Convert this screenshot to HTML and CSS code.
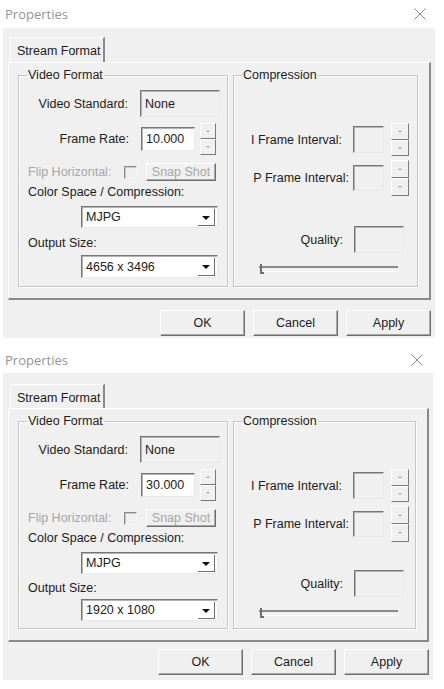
FILE: index.html
```html
<!DOCTYPE html>
<html>
<head>
<meta charset="utf-8">
<link rel="stylesheet" href="styles.css">
</head>
<body>
<div class="dialog d1">
  <div class="titlebar">
    <span class="title">Properties</span>
    <svg class="close" width="12" height="12" viewBox="0 0 12 12"><path d="M0.5 0.5 L11.5 11.5 M11.5 0.5 L0.5 11.5" stroke="#8a8a8a" stroke-width="1" fill="none"/></svg>
  </div>
  <div class="body">
    <div class="tab">Stream Format</div>
    <div class="panel">
      <fieldset class="group video">
        <legend>Video Format</legend>
        <div class="row std"><span class="lab-r">Video Standard:</span><span class="field ro">None</span></div>
        <div class="row rate"><span class="lab-r">Frame Rate:</span><span class="field edit">10.000</span><span class="spin"><span class="sb up"></span><span class="sb down"></span></span></div>
        <div class="row flip"><span class="lab-l dis">Flip Horizontal:</span><span class="check"></span><span class="btn snap">Snap Shot</span></div>
        <div class="lab cs">Color Space / Compression:</div>
        <div class="select s1"><span class="val">MJPG</span><span class="arrow"></span></div>
        <div class="lab os">Output Size:</div>
        <div class="select s2"><span class="val">4656 x 3496</span><span class="arrow"></span></div>
      </fieldset>
      <fieldset class="group comp">
        <legend>Compression</legend>
        <div class="row irow"><span class="lab-r li">I Frame Interval:</span><span class="field box"></span><span class="spin small"><span class="sb up"></span><span class="sb down"></span></span></div>
        <div class="row prow"><span class="lab-r lp">P Frame Interval:</span><span class="field box"></span><span class="spin small"><span class="sb up"></span><span class="sb down"></span></span></div>
        <div class="row qrow"><span class="lab-r lq">Quality:</span><span class="field qbox"></span></div>
        <div class="slider"><span class="thumb"></span></div>
      </fieldset>
    </div>
    <div class="buttons"><span class="btn big">OK</span><span class="btn big">Cancel</span><span class="btn big">Apply</span></div>
  </div>
</div>

<div class="dialog d2">
  <div class="titlebar">
    <span class="title">Properties</span>
    <svg class="close" width="12" height="12" viewBox="0 0 12 12"><path d="M0.5 0.5 L11.5 11.5 M11.5 0.5 L0.5 11.5" stroke="#8a8a8a" stroke-width="1" fill="none"/></svg>
  </div>
  <div class="body">
    <div class="tab">Stream Format</div>
    <div class="panel">
      <fieldset class="group video">
        <legend>Video Format</legend>
        <div class="row std"><span class="lab-r">Video Standard:</span><span class="field ro">None</span></div>
        <div class="row rate"><span class="lab-r">Frame Rate:</span><span class="field edit">30.000</span><span class="spin"><span class="sb up"></span><span class="sb down"></span></span></div>
        <div class="row flip"><span class="lab-l dis">Flip Horizontal:</span><span class="check"></span><span class="btn snap">Snap Shot</span></div>
        <div class="lab cs">Color Space / Compression:</div>
        <div class="select s1"><span class="val">MJPG</span><span class="arrow"></span></div>
        <div class="lab os">Output Size:</div>
        <div class="select s2"><span class="val">1920 x 1080</span><span class="arrow"></span></div>
      </fieldset>
      <fieldset class="group comp">
        <legend>Compression</legend>
        <div class="row irow"><span class="lab-r li">I Frame Interval:</span><span class="field box"></span><span class="spin small"><span class="sb up"></span><span class="sb down"></span></span></div>
        <div class="row prow"><span class="lab-r lp">P Frame Interval:</span><span class="field box"></span><span class="spin small"><span class="sb up"></span><span class="sb down"></span></span></div>
        <div class="row qrow"><span class="lab-r lq">Quality:</span><span class="field qbox"></span></div>
        <div class="slider"><span class="thumb"></span></div>
      </fieldset>
    </div>
    <div class="buttons"><span class="btn big">OK</span><span class="btn big">Cancel</span><span class="btn big">Apply</span></div>
  </div>
</div>
</body>
</html>
```
FILE: styles.css
```css
* { box-sizing: border-box; }
body {
  margin: 0;
  background: #fff;
  font-family: "Liberation Sans", Arial, sans-serif;
  font-size: 12.5px;
  color: #1c1c1c;
}
.dialog { width: 440px; }
.d2 { margin-top: 8px; }

.titlebar {
  height: 28px;
  display: flex;
  align-items: center;
  justify-content: space-between;
  padding: 0 14px 0 5px;
}
.title {
  font-family: "Open Sans", "Liberation Sans", sans-serif;
  font-size: 13px;
  color: #959595;
}
.close { display: block; }

.body {
  margin-left: 3px;
  width: 432px;
  height: 310px;
  background: #f0f0f0;
  padding: 9px 4px 0 5px;
}
.tab {
  margin-left: 2px;
  width: 95px;
  height: 25px;
  display: flex;
  align-items: center;
  padding-left: 6px;
  padding-top: 2px;
  border-top: 1px solid #fff;
  border-left: 1px solid #fff;
  border-right: 2px solid #8a8a8a;
}
.panel {
  width: 423px;
  height: 238px;
  border-top: 1px solid #fff;
  border-left: 1px solid #fff;
  border-right: 2px solid #8a8a8a;
  border-bottom: 2px solid #8a8a8a;
  display: flex;
  gap: 5px;
  padding: 5px 0 0 9px;
}
.group {
  margin: 0;
  padding: 0;
  border: 1px solid #c6c6c6;
  box-shadow: 1px 1px 0 #fff, inset 1px 1px 0 #fff;
  height: 219px;
  display: flex;
  flex-direction: column;
  min-width: 0;
}
.group legend {
  margin-left: 8px;
  padding: 0 1px;
  line-height: 15px;
}
.video { width: 210px; }
.comp { width: 185px; }

.row { display: flex; align-items: center; }
.lab-r { text-align: right; flex: none; }
.lab, .lab-l { padding-left: 9px; line-height: 14px; }
.dis { color: #a6a6a6; }

.field {
  flex: none;
  border: 1px solid;
  border-color: #767676 #e8e8e8 #e8e8e8 #767676;
  box-shadow: inset 1px 1px 0 #b4b4b4;
  display: flex;
  align-items: center;
  padding-left: 4px;
}
.ro { background: #f0f0f0; }
.edit { background: #fff; }

.std { margin-top: 7px; }
.std .lab-r { width: 109px; margin-right: 12px; }
.std .field { width: 80px; height: 27px; }

.rate { margin-top: 6px; height: 32px; }
.rate .lab-r { width: 110px; margin-right: 12px; }
.rate .field { width: 54px; height: 24px; }

.spin {
  flex: none;
  display: flex;
  flex-direction: column;
  width: 16px;
  height: 32px;
  margin-left: 5px;
}
.sb {
  flex: 1;
  position: relative;
  border: 1px solid;
  border-color: #fff #7a7a7a #7a7a7a #fff;
  background: #f0f0f0;
}
.sb::after {
  content: "";
  position: absolute;
  left: 50%;
  top: 50%;
  margin-left: -2px;
  border-left: 2px solid transparent;
  border-right: 2px solid transparent;
}
.up::after { border-bottom: 2px solid #a8a8a8; margin-top: -1px; }
.down::after { border-top: 2px solid #a8a8a8; margin-top: -1px; }

.flip { margin-top: 8px; height: 18px; }
.flip .lab-l { width: 105px; }
.check {
  flex: none;
  width: 13px;
  height: 13px;
  border: 1px solid;
  border-color: #8a8a8a #f6f6f6 #f6f6f6 #8a8a8a;
  box-shadow: inset 1px 1px 0 #c8c8c8;
}
.btn {
  flex: none;
  display: flex;
  align-items: center;
  justify-content: center;
  background: #f0f0f0;
  border: 1px solid;
  border-color: #fff #6e6e6e #6e6e6e #fff;
  box-shadow: inset -1px -1px 0 #a8a8a8;
}
.snap {
  width: 70px;
  height: 18px;
  margin-left: 9px;
  color: #a6a6a6;
}

.cs { margin-top: 4px; }
.os { margin-top: 8px; }
.select {
  margin-left: 62px;
  width: 137px;
  display: flex;
  background: #fff;
  border: 1px solid;
  border-color: #767676 #e8e8e8 #e8e8e8 #767676;
  box-shadow: inset 1px 1px 0 #b4b4b4;
}
.s1 { margin-top: 7px; height: 22px; }
.s2 { margin-top: 5px; height: 23px; }
.select .val {
  flex: 1;
  display: flex;
  align-items: center;
  padding-left: 4px;
}
.arrow {
  flex: none;
  width: 17px;
  margin: 2px 2px 1px 0;
  position: relative;
  border-right: 1px solid #6e6e6e;
  border-bottom: 1px solid #6e6e6e;
  background: #fff;
}
.arrow::after {
  content: "";
  position: absolute;
  left: 4px;
  top: 7px;
  border-left: 4px solid transparent;
  border-right: 4px solid transparent;
  border-top: 4px solid #111;
}

.irow { margin-top: 40px; height: 33px; }
.irow .lab-r { width: 108px; margin-right: 11px; }
.box { width: 31px; height: 27px; background: #f0f0f0; }
.irow .spin { margin-left: 7px; width: 18px; height: 33px; }
.prow { margin-top: 4px; height: 36px; }
.prow .lab-r { width: 115px; margin-right: 4px; }
.prow .box { height: 26px; }
.prow .spin { margin-left: 7px; width: 18px; height: 36px; }
.qrow { margin-top: 30px; height: 27px; }
.qrow .lab-r { width: 109px; margin-right: 11px; }
.qbox { width: 50px; height: 27px; background: #f0f0f0; }

.slider {
  margin-top: 9px;
  margin-left: 25px;
  width: 139px;
  height: 14px;
  position: relative;
  display: flex;
  align-items: center;
}
.slider::before {
  content: "";
  flex: 1;
  height: 3px;
  border-top: 2px solid #8a8a8a;
  border-bottom: 1px solid #fff;
}
.thumb {
  position: absolute;
  left: 1px;
  top: 2px;
  width: 4px;
  height: 10px;
  border-left: 2px solid #6e6e6e;
  border-bottom: 2px solid #6e6e6e;
}

.buttons {
  margin-top: 10px;
  display: flex;
  justify-content: flex-end;
  gap: 8px;
}
.big { width: 85px; height: 26px; }

/* second dialog is slightly smaller */
.d2 .titlebar { height: 27px; padding-right: 17px; }
.d2 .body { width: 430px; height: 307px; padding-top: 11px; }
.d2 .tab { height: 24px; }
.d2 .panel { width: 421px; height: 234px; }
.d2 .group { height: 215px; }
.d2 .comp { width: 183px; }
.d2 .os { margin-top: 7px; }
.d2 .s2 { margin-top: 4px; height: 22px; }
.d2 .qrow { margin-top: 28px; }
.d2 .buttons { margin-top: 7px; }
```
